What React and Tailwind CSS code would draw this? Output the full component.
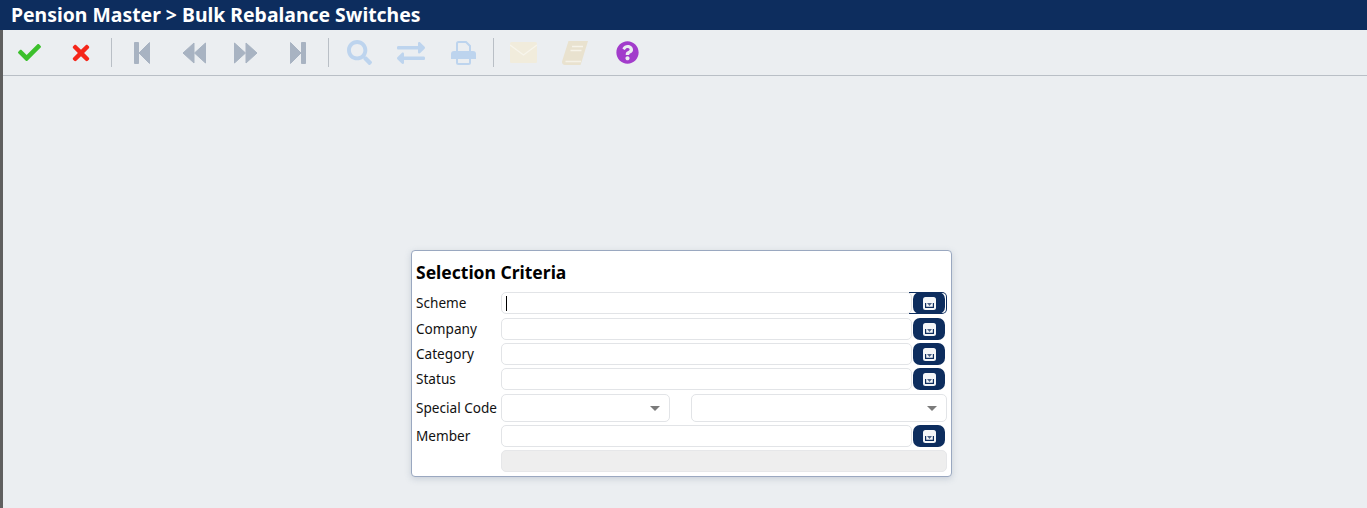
import React from 'react';
import { FaCheck, FaTimes, FaSearch, FaExchangeAlt, FaQuestionCircle } from 'react-icons/fa';

function Separator({ className }) {
    return <div className={`w-px h-[29px] bg-[#b9bfc6] ${className}`} />;
}

function ToolButton({ children, className = '' }) {
    return <div className={`w-[52px] flex items-center justify-center shrink-0 ${className}`}>{children}</div>;
}

function NavIcon({ width, d, flip }) {
    return (
        <svg width={width} height="22" viewBox={`0 0 ${width} 22`} className={`text-[#a8b3c2] ${flip ? '-scale-x-100' : ''}`}>
            <path d={d} fill="currentColor" stroke="currentColor" strokeWidth="1" strokeLinejoin="round" />
        </svg>
    );
}

const FIRST_PATH = 'M0.5 0.5h4v21h-4zM15.5 0.5v21L5 11z';
const BACK_PATH = 'M12 1v20L1 11zM23.5 1v20L12.5 11z';

function PrintIcon() {
    return (
        <svg width="25" height="24" viewBox="0 0 25 24" className="text-[#bdd4ee]">
            <path d="M6 11V2.5A1.5 1.5 0 0 1 7.5 1H15l4 4v6" fill="none" stroke="currentColor" strokeWidth="2" />
            <path d="M3 10h19a3 3 0 0 1 3 3v5H0v-5a3 3 0 0 1 3-3z" fill="currentColor" />
            <path d="M6 18v3.5A1.5 1.5 0 0 0 7.5 23h10a1.5 1.5 0 0 0 1.5-1.5V18" fill="none" stroke="currentColor" strokeWidth="2" />
        </svg>
    );
}

function MailIcon() {
    return (
        <svg width="27" height="21" viewBox="0 0 27 21" className="text-[#f1ecdc]">
            <rect width="27" height="21" rx="1.5" fill="currentColor" />
            <path d="M0 3l13.5 10L27 3" fill="none" stroke="#f7f5ec" strokeWidth="1.3" />
        </svg>
    );
}

function BookIcon() {
    return (
        <svg width="26" height="24" viewBox="0 0 26 24" className="text-[#e9e2cf]">
            <path d="M6.5 0H26L20 19.5 18.5 24H3a3 3 0 0 1-3-3.5z" fill="currentColor" />
            <path d="M3.5 20.5H19" stroke="#f5f2e8" strokeWidth="1.5" />
            <path d="M10 5.5h11M8.5 9.5h11" stroke="#f7f4ea" strokeWidth="1.6" />
        </svg>
    );
}

function LookupButton({ focused }) {
    return (
        <div className="relative ml-px shrink-0">
            {focused && <span className="absolute -left-[4px] -right-[2px] top-0 bottom-0 border-y border-r border-[#0d2d5e] rounded-r-[5px]" />}
            <button className="relative w-[32px] h-[22px] rounded-[7px] bg-[#0d2d5e] flex items-center justify-center">
                <svg width="13" height="13" viewBox="0 0 13 13">
                    <rect width="13" height="13" rx="2.5" fill="#f4f6f8" />
                    <path d="M2.6 6v4.4h7.8V6" fill="none" stroke="#0d2d5e" strokeWidth="1.2" />
                    <path d="M4 6h5L6.5 9z" fill="#4a6084" />
                </svg>
            </button>
        </div>
    );
}

function Label({ children }) {
    return <label className="w-[85px] shrink-0 text-[13.6px] leading-[22px] text-[#111] whitespace-nowrap">{children}</label>;
}

function LookupRow({ label, focused, className = '' }) {
    return (
        <div className={`flex items-center ${className}`}>
            <Label>{label}</Label>
            <div className="w-[411px] h-[22px] rounded-[5px] border border-[#e2e4e7] bg-white flex items-center pl-1">
                {focused && <div className="w-px h-[15px] bg-black" />}
            </div>
            <LookupButton focused={focused} />
        </div>
    );
}

function SelectBox({ className }) {
    return (
        <div className={`h-[28px] rounded-[5px] border border-[#e2e4e7] bg-white flex items-center justify-end pr-[9px] ${className}`}>
            <div className="w-0 h-0 border-l-[5px] border-r-[5px] border-t-[5px] border-l-transparent border-r-transparent border-t-[#7b7b7b]" />
        </div>
    );
}

export default function App() {
    return (
        <div className="h-[508px] overflow-hidden bg-[#ebeef1] flex flex-col font-['Noto_Sans','Open_Sans',sans-serif]">
            <header className="h-[30px] bg-[#0d2d5e] shrink-0 pl-[11px] text-white font-bold text-[19.4px] leading-[29px]">
                Pension Master &gt; Bulk Rebalance Switches
            </header>

            <div className="flex flex-1 min-h-0">
                <div className="w-[3px] bg-[#5f5f5f] shrink-0" />
                <div className="flex-1 min-w-0">
                    <div className="h-[46px] border-b border-[#b9bfc6] flex items-center">
                        <ToolButton><FaCheck size={23} className="text-[#3cc02c]" /></ToolButton>
                        <ToolButton><FaTimes size={24} className="text-[#f5261a]" /></ToolButton>
                        <Separator className="ml-[4px] mr-[4px]" />
                        <ToolButton><NavIcon width={16} d={FIRST_PATH} /></ToolButton>
                        <ToolButton><NavIcon width={24} d={BACK_PATH} /></ToolButton>
                        <ToolButton><NavIcon width={24} d={BACK_PATH} flip /></ToolButton>
                        <ToolButton><NavIcon width={16} d={FIRST_PATH} flip /></ToolButton>
                        <Separator className="ml-[4px] mr-[4px]" />
                        <ToolButton><FaSearch size={25} className="text-[#bdd4ee]" /></ToolButton>
                        <ToolButton><FaExchangeAlt size={28} className="text-[#bdd4ee]" /></ToolButton>
                        <ToolButton><PrintIcon /></ToolButton>
                        <Separator className="ml-[4px] mr-[3px]" />
                        <ToolButton><MailIcon /></ToolButton>
                        <ToolButton><BookIcon /></ToolButton>
                        <ToolButton><FaQuestionCircle size={23} className="text-[#a23ccb]" /></ToolButton>
                    </div>

                    <section className="mt-[174px] ml-[408px] w-[541px] h-[227px] rounded-[4px] border border-[#9aa8c0] bg-white shadow-[0_2px_6px_rgba(120,135,160,0.3)] pl-[4px] pt-[8px]">
                        <h2 className="text-[17.5px] leading-[26px] font-bold text-black">Selection Criteria</h2>
                        <LookupRow label="Scheme" focused className="mt-[7px]" />
                        <LookupRow label="Company" className="mt-[4px]" />
                        <LookupRow label="Category" className="mt-[3px]" />
                        <LookupRow label="Status" className="mt-[3px]" />
                        <div className="flex items-center mt-[4px]">
                            <Label>Special Code</Label>
                            <SelectBox className="w-[169px]" />
                            <SelectBox className="w-[256px] ml-[21px]" />
                        </div>
                        <LookupRow label="Member" className="mt-[3px]" />
                        <div className="ml-[85px] w-[446px] h-[22px] mt-[3px] rounded-[5px] border border-[#e6e7e9] bg-[#eeeeee]" />
                    </section>
                </div>
            </div>
        </div>
    );
}
